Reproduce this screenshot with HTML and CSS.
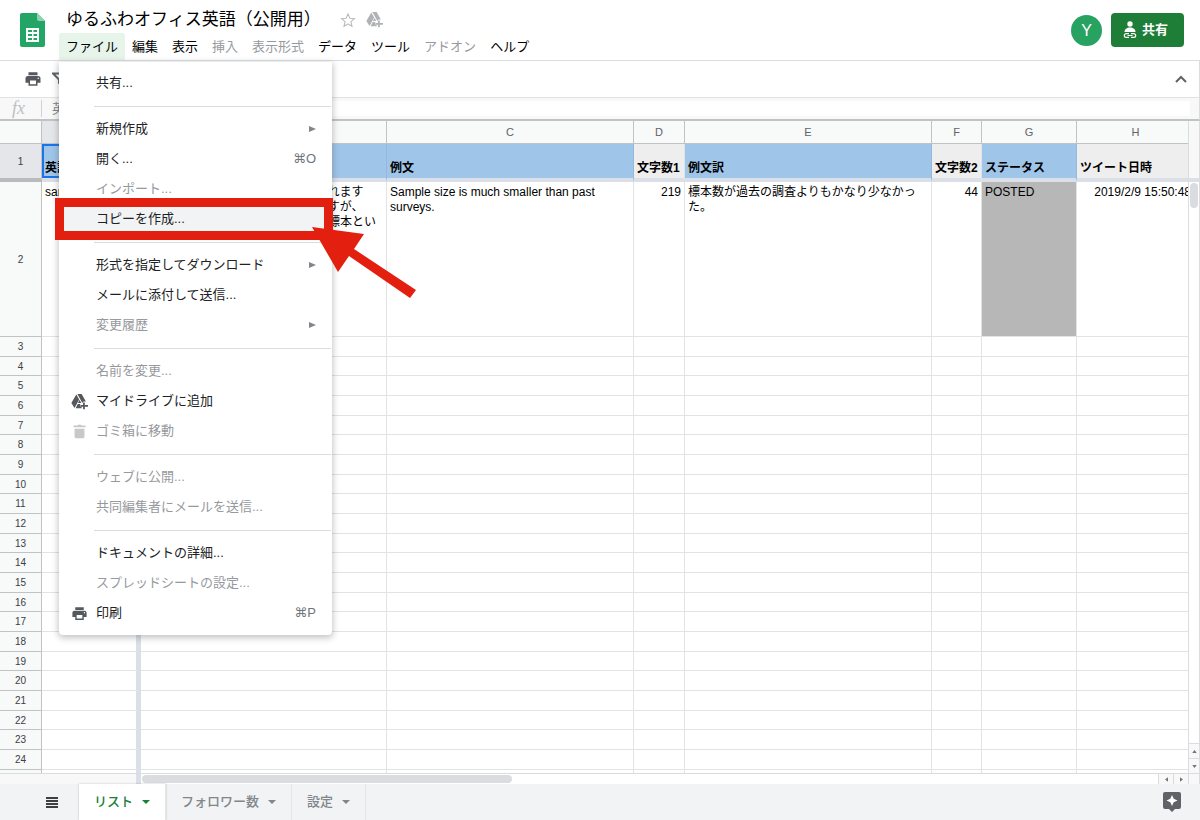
FILE: index.html
```html
<!DOCTYPE html>
<html lang="ja">
<head>
<meta charset="utf-8">
<title>ゆるふわオフィス英語（公開用）</title>
<link rel="stylesheet" href="styles.css">
</head>
<body>
<svg class="defs" aria-hidden="true">
  <symbol id="i-print" viewBox="0 0 24 24"><path d="M19 8H5c-1.660 0-3 1.340-3 3v6h4v4h12v-4h4v-6c0-1.660-1.340-3-3-3zm-3 11H8v-5h8v5zm3-7c-.550 0-1-.450-1-1s.450-1 1-1 1 .450 1 1-.450 1-1 1zM18 3H6v4h12V3z"/></symbol>
  <symbol id="i-drive" viewBox="0 0 24 24"><path d="M7.500 2 11.500 9 5 21 .500 14z"/><path d="M9 1.500h6L21 12h-3.500l-1.500 2z"/><path d="M9.500 15.500H13V19h2v2.500H6.500z"/><path d="M12 9.500 14.500 14H9.800z"/><path d="M17 13.500h2.500V17H24v2.500h-4.500V23H17v-3.500h-3.500V17H17z"/></symbol>
  <symbol id="i-down" viewBox="0 0 8 4"><path d="M0 0h8L4 4z"/></symbol>
</svg>

<header class="header">
  <svg class="logo" viewBox="0 0 25 34"><path fill="#23a566" d="M2 0h15l8 8v24a2 2 0 0 1-2 2H2a2 2 0 0 1-2-2V2a2 2 0 0 1 2-2z"/><path fill="#8ed1b1" d="M17 0l8 8h-6a2 2 0 0 1-2-2z"/><path fill="#fff" fill-rule="evenodd" d="M6 15h13v14H6zM8 17v2h4v-2zm5.500 0v2H17v-2zM8 21v2h4v-2zm5.500 0v2H17v-2zM8 25v2h4v-2zm5.500 0v2H17v-2z"/></svg>
  <div class="heading">
    <div class="title-row">
      <h1 class="title">ゆるふわオフィス英語（公開用）</h1>
      <button class="icon-btn" aria-label="スター"><svg class="star" viewBox="0 0 24 24"><path fill="none" stroke="#b8babd" stroke-width="1.600" d="M12 2.800l2.700 6.500 7 .600-5.300 4.600 1.600 6.900-6-3.700-6 3.700 1.600-6.900L2.300 9.900l7-.600z"/></svg></button>
      <button class="icon-btn" aria-label="ドライブに追加"><svg class="drive"><use href="#i-drive"/></svg></button>
    </div>
    <nav class="menubar">
      <div class="menu-host">
        <button class="menu-btn open">ファイル</button>
        <div class="menu" role="menu">
          <button class="item" role="menuitem">共有...</button>
          <hr class="sep">
          <button class="item" role="menuitem">新規作成<span class="arrow"></span></button>
          <button class="item" role="menuitem">開く...<span class="key">⌘O</span></button>
          <button class="item" role="menuitem" disabled>インポート...</button>
          <div class="marked">
            <button class="item hover" role="menuitem">コピーを作成...</button>
            <div class="callout"></div>
            <svg class="pointer" viewBox="0 0 104 72"><path fill="#e3200f" d="M0 0 52 7 42 22 104 63 98 71 37 29 26 45z"/></svg>
          </div>
          <hr class="sep">
          <button class="item" role="menuitem">形式を指定してダウンロード<span class="arrow"></span></button>
          <button class="item" role="menuitem">メールに添付して送信...</button>
          <button class="item" role="menuitem" disabled>変更履歴<span class="arrow"></span></button>
          <hr class="sep">
          <button class="item" role="menuitem" disabled>名前を変更...</button>
          <button class="item" role="menuitem"><svg class="item-icon"><use href="#i-drive"/></svg>マイドライブに追加</button>
          <button class="item" role="menuitem" disabled><svg class="item-icon" viewBox="0 0 24 24"><path d="M5 8h14v11c0 1.500-1 2.500-2.500 2.500h-9C6 21.500 5 20.500 5 19zM3.500 3.500H9L10 2.500h4l1 1h5.500V6h-17z"/></svg>ゴミ箱に移動</button>
          <hr class="sep">
          <button class="item" role="menuitem" disabled>ウェブに公開...</button>
          <button class="item" role="menuitem" disabled>共同編集者にメールを送信...</button>
          <hr class="sep">
          <button class="item" role="menuitem">ドキュメントの詳細...</button>
          <button class="item" role="menuitem" disabled>スプレッドシートの設定...</button>
          <button class="item" role="menuitem"><svg class="item-icon"><use href="#i-print"/></svg>印刷<span class="key">⌘P</span></button>
        </div>
      </div>
      <button class="menu-btn">編集</button>
      <button class="menu-btn">表示</button>
      <button class="menu-btn" disabled>挿入</button>
      <button class="menu-btn" disabled>表示形式</button>
      <button class="menu-btn">データ</button>
      <button class="menu-btn">ツール</button>
      <button class="menu-btn" disabled>アドオン</button>
      <button class="menu-btn">ヘルプ</button>
    </nav>
  </div>
  <div class="account">
    <span class="avatar">Y</span>
    <button class="share"><svg class="share-icon" viewBox="0 0 14 18"><circle cx="7" cy="3" r="2.700" fill="#fff"/><path fill="#fff" d="M1.500 11c0-3 2.500-4.500 5.500-4.500s5.500 1.500 5.500 4.500z"/><path fill="none" stroke="#fff" stroke-width="1.200" d="M6 12.600H3.200a1.900 1.900 0 0 0 0 3.800H6M8 12.600h2.800a1.900 1.900 0 0 1 0 3.800H8M4.500 14.500h5"/></svg>共有</button>
  </div>
</header>

<div class="toolbar">
  <button class="icon-btn" aria-label="印刷"><svg class="tool"><use href="#i-print"/></svg></button>
  <button class="icon-btn" aria-label="フィルタ"><svg class="tool" viewBox="0 0 18 18"><path fill="none" stroke="#5f6368" stroke-width="2" d="M1 3.500h15L11 9.500v6l-4-2.500V9.500z"/></svg></button>
  <button class="icon-btn collapse" aria-label="メニューを非表示"><svg class="chevron" viewBox="0 0 12 8"><path fill="none" stroke="#5f6368" stroke-width="2" d="M1 7l5-5 5 5"/></svg></button>
</div>

<div class="formula">
  <label class="fx" for="formula">fx</label>
  <input class="formula-input" id="formula" value="英語">
</div>

<main class="sheet">
  <div class="grid">
    <table class="cells">
      <colgroup><col class="c-num"><col class="c-a"><col class="c-b"><col class="c-c"><col class="c-d"><col class="c-c"><col class="c-f"><col class="c-g"><col></colgroup>
      <thead>
        <tr class="letters"><th></th><th class="sel frozen">A</th><th>B</th><th>C</th><th>D</th><th>E</th><th>F</th><th>G</th><th>H</th></tr>
      </thead>
      <tbody>
        <tr class="first"><th class="sel">1</th><td class="blue cursor">英語</td><td class="blue"></td><td class="blue">例文</td><td class="pale">文字数1</td><td class="blue">例文訳</td><td class="pale">文字数2</td><td class="blue">ステータス</td><td class="pale">ツイート日時</td></tr>
        <tr class="second"><th>2</th><td class="frozen">sample size</td><td class="meaning">標本の大きさを示す際によく使われます<br>調査の対象となるデータの件数ですが、<br>統計で母集団から選んだデータを標本とい</td><td>Sample size is much smaller than past surveys.</td><td class="num">219</td><td>標本数が過去の調査よりもかなり少なかった。</td><td class="num">44</td><td class="gray">POSTED</td><td class="num">2019/2/9 15:50:48</td></tr>
        <tr><th>3</th><td class="frozen"></td><td></td><td></td><td></td><td></td><td></td><td></td><td></td></tr>
        <tr><th>4</th><td class="frozen"></td><td></td><td></td><td></td><td></td><td></td><td></td><td></td></tr>
        <tr><th>5</th><td class="frozen"></td><td></td><td></td><td></td><td></td><td></td><td></td><td></td></tr>
        <tr><th>6</th><td class="frozen"></td><td></td><td></td><td></td><td></td><td></td><td></td><td></td></tr>
        <tr><th>7</th><td class="frozen"></td><td></td><td></td><td></td><td></td><td></td><td></td><td></td></tr>
        <tr><th>8</th><td class="frozen"></td><td></td><td></td><td></td><td></td><td></td><td></td><td></td></tr>
        <tr><th>9</th><td class="frozen"></td><td></td><td></td><td></td><td></td><td></td><td></td><td></td></tr>
        <tr><th>10</th><td class="frozen"></td><td></td><td></td><td></td><td></td><td></td><td></td><td></td></tr>
        <tr><th>11</th><td class="frozen"></td><td></td><td></td><td></td><td></td><td></td><td></td><td></td></tr>
        <tr><th>12</th><td class="frozen"></td><td></td><td></td><td></td><td></td><td></td><td></td><td></td></tr>
        <tr><th>13</th><td class="frozen"></td><td></td><td></td><td></td><td></td><td></td><td></td><td></td></tr>
        <tr><th>14</th><td class="frozen"></td><td></td><td></td><td></td><td></td><td></td><td></td><td></td></tr>
        <tr><th>15</th><td class="frozen"></td><td></td><td></td><td></td><td></td><td></td><td></td><td></td></tr>
        <tr><th>16</th><td class="frozen"></td><td></td><td></td><td></td><td></td><td></td><td></td><td></td></tr>
        <tr><th>17</th><td class="frozen"></td><td></td><td></td><td></td><td></td><td></td><td></td><td></td></tr>
        <tr><th>18</th><td class="frozen"></td><td></td><td></td><td></td><td></td><td></td><td></td><td></td></tr>
        <tr><th>19</th><td class="frozen"></td><td></td><td></td><td></td><td></td><td></td><td></td><td></td></tr>
        <tr><th>20</th><td class="frozen"></td><td></td><td></td><td></td><td></td><td></td><td></td><td></td></tr>
        <tr><th>21</th><td class="frozen"></td><td></td><td></td><td></td><td></td><td></td><td></td><td></td></tr>
        <tr><th>22</th><td class="frozen"></td><td></td><td></td><td></td><td></td><td></td><td></td><td></td></tr>
        <tr><th>23</th><td class="frozen"></td><td></td><td></td><td></td><td></td><td></td><td></td><td></td></tr>
        <tr><th>24</th><td class="frozen"></td><td></td><td></td><td></td><td></td><td></td><td></td><td></td></tr>
        <tr class="cut"><th></th><td class="frozen"></td><td></td><td></td><td></td><td></td><td></td><td></td><td></td></tr>
      </tbody>
    </table>
  </div>
  <div class="vscroll">
    <div class="vtop"></div>
    <div class="vtrack"><div class="vthumb"></div></div>
    <button class="vbtn" aria-label="上へ"><svg class="tick" viewBox="0 0 6 4"><path d="M0 4h6L3 0z"/></svg></button>
    <button class="vbtn" aria-label="下へ"><svg class="tick" viewBox="0 0 6 4"><path d="M0 0h6L3 4z"/></svg></button>
  </div>
</main>

<div class="hscroll">
  <div class="hfixed"></div>
  <div class="htrack"><div class="hthumb"></div></div>
  <button class="hbtn" aria-label="左へ"><svg class="tick-h" viewBox="0 0 4 6"><path d="M4 0v6L0 3z"/></svg></button>
  <button class="hbtn" aria-label="右へ"><svg class="tick-h" viewBox="0 0 4 6"><path d="M0 0v6L4 3z"/></svg></button>
  <div class="corner"></div>
</div>

<footer class="tabs">
  <button class="all" aria-label="すべてのシート"><svg class="bars" viewBox="0 0 12 11"><path fill="#3c4043" d="M0 0h12v2H0zM0 3h12v2H0zM0 6h12v2H0zM0 9h12v2H0z"/></svg></button>
  <button class="tab active">リスト<svg class="caret"><use href="#i-down"/></svg></button>
  <button class="tab">フォロワー数<svg class="caret"><use href="#i-down"/></svg></button>
  <button class="tab">設定<svg class="caret"><use href="#i-down"/></svg></button>
  <button class="explore" aria-label="データ探索"><svg class="explore-icon" viewBox="0 0 18 20"><path fill="#5f6368" d="M2 0h14a2 2 0 0 1 2 2v13a2 2 0 0 1-2 2h-4l-3 3-3-3H2a2 2 0 0 1-2-2V2a2 2 0 0 1 2-2z"/><path fill="#fff" d="M9 3l1.700 3.800L14.500 8.500l-3.800 1.700L9 14l-1.700-3.800L3.500 8.500l3.800-1.700z"/></svg></button>
</footer>
</body>
</html>
```

FILE: styles.css
```css
* { box-sizing: border-box; }

body {
  margin: 0;
  height: 100vh;
  display: flex;
  flex-direction: column;
  overflow: hidden;
  background: #fff;
  color: #202124;
  font: 13px/20px "Liberation Sans", "Noto Sans CJK JP", sans-serif;
}

button {
  margin: 0;
  padding: 0;
  border: 0;
  background: none;
  color: inherit;
  font: inherit;
}

svg { display: block; flex: none; }
.defs { position: absolute; width: 0; height: 0; }
.icon-btn { display: flex; }

.header {
  display: flex;
  align-items: flex-start;
  height: 61px;
  padding: 0 16px 0 20px;
  border-bottom: 1px solid #dadce0;
}
.logo { width: 25px; height: 34px; margin-top: 13px; }
.heading { flex: 1; margin-left: 14px; padding-top: 6px; }
.title-row { display: flex; align-items: center; height: 27px; padding-left: 7px; }
.title {
  width: 274px;
  margin: 0;
  font-size: 17px;
  font-weight: 400;
  line-height: 26px;
  color: #000;
  white-space: nowrap;
}
.star { width: 16px; height: 16px; }
.drive { width: 17px; height: 17px; margin-left: 10px; fill: #b0b2b5; }

.menubar { display: flex; }
.menu-host { position: relative; }
.menu-btn {
  height: 27px;
  padding: 0 7px;
  border-radius: 3px 3px 0 0;
  color: #000;
  white-space: nowrap;
}
.menu-btn.open { background: #e6f4ea; }
.menu-btn:disabled { color: #96999d; }

.menu {
  position: absolute;
  z-index: 10;
  top: 29px;
  left: 0;
  width: 273px;
  padding: 6px 0 7px;
  border-radius: 0 0 4px 4px;
  background: #fff;
  box-shadow: 0 2px 6px 1px rgba(60, 64, 67, .3);
}
.item {
  position: relative;
  display: flex;
  align-items: center;
  width: 100%;
  height: 30px;
  padding: 0 16px 0 37px;
  white-space: nowrap;
}
.item:disabled { color: #96999d; }
.item.hover { background: #f1f3f4; }
.item-icon { position: absolute; left: 12px; width: 17px; height: 17px; fill: #55585c; }
.item:disabled .item-icon { fill: #c6c8ca; }
.arrow {
  margin-left: auto;
  border: solid transparent;
  border-width: 3px 0 3px 7px;
  border-left-color: #80868b;
}
.key {
  margin-left: auto;
  color: #70757a;
  font-family: "Liberation Sans", "DejaVu Sans", sans-serif;
}
.sep { height: 1px; margin: 8px 1px 7px 35px; border: 0; background: #dadce0; }

.marked { position: relative; }
.callout { position: absolute; inset: -6px -1px -6px -4px; border: 9px solid #e3200f; }
.pointer { position: absolute; z-index: 1; left: 253px; top: 23px; width: 104px; height: 72px; }

.account { display: flex; align-items: center; gap: 9px; margin-top: 13px; }
.avatar {
  width: 31px;
  height: 31px;
  border-radius: 50%;
  background: #27a260;
  color: #fff;
  font-size: 16px;
  line-height: 31px;
  text-align: center;
}
.share {
  display: flex;
  align-items: center;
  gap: 5px;
  height: 34px;
  padding: 0 16px 0 12px;
  border-radius: 4px;
  background: #1e7e38;
  color: #fff;
  font-weight: 700;
}
.share-icon { width: 14px; height: 18px; }

.toolbar {
  display: flex;
  align-items: center;
  gap: 10px;
  height: 37px;
  padding: 0 12px 0 24px;
  border-right: 1px solid #dadce0;
  border-bottom: 1px solid #dfe1e4;
}
.tool { width: 18px; height: 18px; fill: #55585c; }
.collapse { margin-left: auto; }
.chevron { width: 12px; height: 8px; }

.formula {
  display: flex;
  align-items: center;
  height: 23px;
  padding-right: 9px;
  border-right: 1px solid #dadce0;
  border-bottom: 2px solid #c0c2c4;
  background: #f8f8f8;
}
.fx {
  width: 42px;
  padding-left: 12px;
  border-right: 1px solid #d0d2d4;
  color: #bdbfc1;
  font: italic 18px/17px "Liberation Serif", serif;
}
.formula-input {
  flex: 1;
  height: 15px;
  padding: 0 10px;
  border: 0;
  background: linear-gradient(to right, #f8f8f8 18px, #fff 18px);
  color: #80868b;
  font: inherit;
}

.sheet { display: flex; flex: 1; min-height: 0; }
.grid { flex: 1; min-width: 0; overflow: hidden; }
.cells {
  width: calc(100% + 7px);
  height: 100%;
  table-layout: fixed;
  border-spacing: 0;
  color: #000;
  font-size: 12px;
  line-height: 15px;
}
.c-num { width: 42px; }
.c-a { width: 99px; }
.c-b { width: 246px; }
.c-c { width: 247px; }
.c-d { width: 51px; }
.c-f { width: 50px; }
.c-g { width: 95px; }
.cells td {
  padding: 0 3px;
  overflow: hidden;
  border-right: 1px solid #e2e3e3;
  border-bottom: 1px solid #e2e3e3;
  vertical-align: top;
}
.cells th {
  padding: 0;
  border-right: 1px solid #c0c2c3;
  border-bottom: 1px solid #c0c2c3;
  background: #f8f9f9;
  color: #5f6368;
  font-size: 10px;
  font-weight: 400;
}
.cells tbody th { color: #3c4043; }
.cells .letters { height: 23px; }
.cells .letters th { font-size: 11px; }
.cells .sel { background: #e4e6ea; }
.cells .first { height: 38px; }
.cells .first td {
  padding-bottom: 2px;
  border-bottom: 4px solid #dadfe8;
  font-weight: 700;
  vertical-align: bottom;
  white-space: nowrap;
}
.cells .first th { border-bottom: 4px solid #b9bbbc; }
.cells .first .blue { border-right-color: #94b9dc; background: #9fc5e8; }
.cells .first .pale { background: #eeeeee; }
.cells .first .cursor { box-shadow: inset 0 0 0 2px #1a73e8; }
.cells .second { height: 155px; }
.cells .second td { padding-top: 3px; }
.cells .second .meaning { padding-left: 7px; }
.cells .frozen { border-right: 5px solid #dadfe8; }
.cells .second .gray { background: #b7b7b7; }
.cells .num { text-align: right; white-space: nowrap; }
.cells .cut { height: 3px; }
.cells .cut th, .cells .cut td { border-bottom: 0; line-height: 0; }

.vscroll {
  display: flex;
  flex-direction: column;
  width: 12px;
  border-left: 1px solid #dadce0;
  border-right: 1px solid #dadce0;
}
.vtop { height: 61px; border-bottom: 4px solid #dadfe8; background: #f8f8f8; }
.vtrack { flex: 1; padding: 1px; }
.vthumb { height: 25px; border-radius: 4px; background: #dadce0; }
.vbtn {
  display: flex;
  align-items: center;
  justify-content: center;
  height: 15px;
  border-top: 1px solid #dadce0;
  background: #f8f8f8;
}
.tick { width: 5px; height: 3px; fill: #70757a; }
.tick-h { width: 3px; height: 5px; fill: #70757a; }

.hscroll { display: flex; height: 11px; border-top: 1px solid #dadce0; }
.hfixed { width: 141px; border-right: 5px solid #dadfe8; background: #f8f8f8; }
.htrack { flex: 1; padding: 1px; }
.hthumb { width: 36.5%; height: 8px; border-radius: 4px; background: #dadce0; }
.hbtn {
  display: flex;
  align-items: center;
  justify-content: center;
  width: 15px;
  border-left: 1px solid #dadce0;
  background: #f8f8f8;
}
.corner { width: 12px; border: solid #dadce0; border-width: 0 1px; background: #f8f8f8; }

.tabs {
  display: flex;
  height: 36px;
  padding-right: 19px;
  background: #f1f3f4;
  color: #80868b;
  font-weight: 500;
}
.all { display: flex; align-items: center; width: 79px; padding-left: 46px; }
.bars { width: 12px; height: 11px; }
.tab {
  display: flex;
  align-items: center;
  gap: 9px;
  padding: 0 15px;
  border-right: 1px solid #e4e6e8;
  white-space: nowrap;
}
.tab.active {
  background: #fff;
  color: #188038;
  box-shadow: 0 0 2px rgba(60, 64, 67, .3);
}
.caret { width: 8px; height: 4px; fill: currentColor; }
.explore { margin-left: auto; }
.explore-icon { width: 18px; height: 20px; }
```
